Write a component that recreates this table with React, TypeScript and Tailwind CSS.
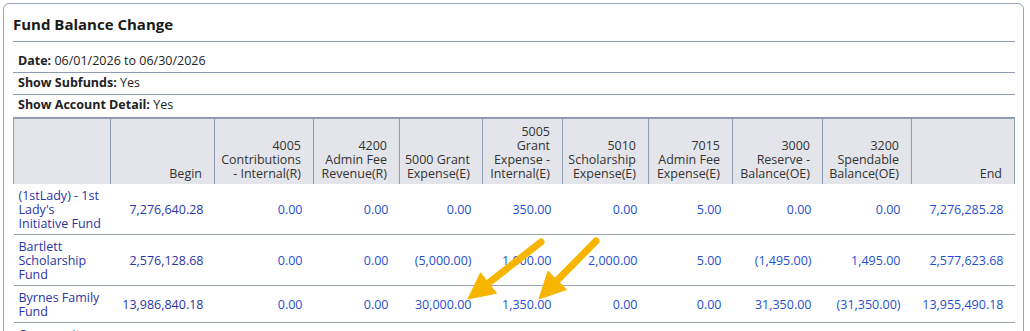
import React from "react"

const columns = [
  { w: "w-[97px]", label: [] as string[] },
  { w: "w-[104px]", label: ["Begin"] },
  { w: "w-[99px]", label: ["4005", "Contributions", "- Internal(R)"] },
  { w: "w-[86px]", label: ["4200", "Admin Fee", "Revenue(R)"] },
  { w: "w-[83px]", label: ["5000 Grant", "Expense(E)"] },
  { w: "w-[80px]", label: ["5005", "Grant", "Expense -", "Internal(E)"] },
  { w: "w-[86px]", label: ["5010", "Scholarship", "Expense(E)"] },
  { w: "w-[84px]", label: ["7015", "Admin Fee", "Expense(E)"] },
  { w: "w-[90px]", label: ["3000", "Reserve -", "Balance(OE)"] },
  { w: "w-[89px]", label: ["3200", "Spendable", "Balance(OE)"] },
  { w: "w-[103px]", label: ["End"] },
]

const rows = [
  {
    name: ["(1stLady) - 1st", "Lady's", "Initiative Fund"],
    values: ["7,276,640.28", "0.00", "0.00", "0.00", "350.00", "0.00", "5.00", "0.00", "0.00", "7,276,285.28"],
  },
  {
    name: ["Bartlett", "Scholarship", "Fund"],
    values: ["2,576,128.68", "0.00", "0.00", "(5,000.00)", "1,000.00", "2,000.00", "5.00", "(1,495.00)", "1,495.00", "2,577,623.68"],
  },
  {
    name: ["Byrnes Family", "Fund"],
    values: ["13,986,840.18", "0.00", "0.00", "30,000.00", "1,350.00", "0.00", "0.00", "31,350.00", "(31,350.00)", "13,955,490.18"],
  },
  {
    name: ["Community", "Foundation", "Fund"],
    values: ["1,204,518.40", "0.00", "0.00", "0.00", "0.00", "0.00", "0.00", "0.00", "0.00", "1,204,518.40"],
  },
]

function InfoRow({ label, value, className }: { label: string; value: string; className: string }) {
  return (
    <div className={`pl-[5px] leading-[14px] text-[12.5px] text-[#222] ${className}`}>
      <span className="font-bold">{label}</span> {value}
    </div>
  )
}

export default function App() {
  return (
    <div className="relative h-[331px] overflow-hidden bg-white font-['Open_Sans',sans-serif]">
      <div className="ml-[3px] mr-[6px] mt-[3px] h-[400px] rounded-[6px] border border-[#9aa5bb] pl-[9px] pr-[8px] pt-[10px]">
        <h1 className="border-b border-[#8f9cb3] pb-[7px] text-[15px] leading-[20px] font-bold text-[#1a1a1a]">
          Fund Balance Change
        </h1>

        <InfoRow label="Date:" value="06/01/2026 to 06/30/2026" className="border-b border-[#8f9cb3] pt-[12px] pb-[4px]" />
        <InfoRow label="Show Subfunds:" value="Yes" className="border-b border-[#8f9cb3] pt-[3px] pb-[4px]" />
        <InfoRow label="Show Account Detail:" value="Yes" className="pt-[3px] pb-[5px]" />

        <table className="w-full table-fixed border-collapse text-[12.5px] leading-[14px]">
          <colgroup>
            {columns.map((c, i) => (
              <col key={i} className={c.w} />
            ))}
          </colgroup>
          <thead>
            <tr className="border-t-2 border-[#8f9cb3] bg-[#e4e5ea]">
              {columns.map((c, i) => (
                <th
                  key={i}
                  className="border-x border-[#8f9cb3] pt-[6px] pb-[3px] pr-[12px] pl-[2px] text-right align-bottom font-normal text-[#333]"
                >
                  {c.label.map((l, j) => (
                    <div key={j} className="whitespace-nowrap">
                      {l}
                    </div>
                  ))}
                </th>
              ))}
            </tr>
          </thead>
          <tbody>
            {rows.map((r, i) => (
              <tr key={i} className="border-b border-[#9aa3b5]">
                <td className="pt-[5px] pb-[3px] pl-[5px] align-top text-[#2b35a8]">
                  {r.name.map((n, j) => (
                    <div key={j} className="whitespace-nowrap">
                      {n}
                    </div>
                  ))}
                </td>
                {r.values.map((v, j) => (
                  <td
                    key={j}
                    className={`pt-[5px] pb-[3px] pr-[11px] text-right align-middle whitespace-nowrap ${
                      j === 0 ? "text-[#2b35a8]" : "text-[#1f4fd0]"
                    }`}
                  >
                    {v}
                  </td>
                ))}
              </tr>
            ))}
          </tbody>
        </table>
      </div>

      {/* annotation arrows */}
      <svg className="pointer-events-none absolute left-0 top-0" width="1030" height="331" viewBox="0 0 1030 331">
        {[
          { x1: 541, y1: 242, x2: 468, y2: 299 },
          { x1: 596, y1: 241, x2: 539, y2: 299 },
        ].map((a, i) => {
          const dx = a.x2 - a.x1
          const dy = a.y2 - a.y1
          const len = Math.hypot(dx, dy)
          const ux = dx / len
          const uy = dy / len
          const head = 26
          const bx = a.x2 - ux * head
          const by = a.y2 - uy * head
          const px = -uy * 13
          const py = ux * 13
          return (
            <g key={i} fill="#f7b500" stroke="#f7b500">
              <line x1={a.x1} y1={a.y1} x2={bx + ux * 4} y2={by + uy * 4} strokeWidth="7" strokeLinecap="round" />
              <polygon points={`${a.x2},${a.y2} ${bx + px},${by + py} ${bx - px},${by - py}`} strokeWidth="1" strokeLinejoin="round" />
            </g>
          )
        })}
      </svg>
    </div>
  )
}
